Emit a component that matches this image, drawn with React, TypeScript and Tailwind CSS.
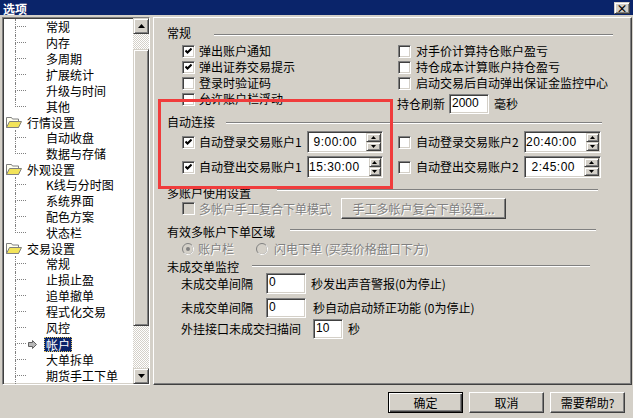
import type { ReactNode } from "react";

const sunken =
  "border border-t-[#808080] border-l-[#808080] border-r-white border-b-white shadow-[inset_1px_1px_0_#404040,inset_-1px_-1px_0_#d4d0c8]";
const raised =
  "border border-t-[#d4d0c8] border-l-[#d4d0c8] border-r-[#404040] border-b-[#404040] shadow-[inset_1px_1px_0_#ffffff,inset_-1px_-1px_0_#808080]";
const dis = "text-[#808080] [text-shadow:1px_1px_0_#ffffff]";
const num = "font-['Liberation_Sans',sans-serif]";

type TreeItem = { label: string; parent?: boolean; last?: boolean; selected?: boolean };

const tree: TreeItem[] = [
  { label: "常规" },
  { label: "内存" },
  { label: "多周期" },
  { label: "扩展统计" },
  { label: "升级与时间" },
  { label: "其他", last: true },
  { label: "行情设置", parent: true },
  { label: "自动收盘" },
  { label: "数据与存储", last: true },
  { label: "外观设置", parent: true },
  { label: "K线与分时图" },
  { label: "系统界面" },
  { label: "配色方案" },
  { label: "状态栏", last: true },
  { label: "交易设置", parent: true },
  { label: "常规" },
  { label: "止损止盈" },
  { label: "追单撤单" },
  { label: "程式化交易" },
  { label: "风控" },
  { label: "帐户", selected: true },
  { label: "大单拆单" },
  { label: "期货手工下单" },
];

function Folder() {
  return (
    <svg width="16" height="13" viewBox="0 0 16 13" className="shrink-0">
      <path d="M0.5 1.5h5l1 1.5h6v8.5h-12z" fill="#fffff0" stroke="#808080" />
      <path d="M0.5 11.5l3-6h12l-3 6z" fill="#f2e35a" stroke="#808080" />
    </svg>
  );
}

function Arrow() {
  return (
    <svg width="9" height="9" viewBox="0 0 9 9">
      <path d="M0.5 2.5h4v-2l4 4-4 4v-2h-4z" fill="#b8b8b8" stroke="#606060" />
    </svg>
  );
}

function Tri({ up, w = 7, h = 4 }: { up?: boolean; w?: number; h?: number }) {
  return (
    <svg width={w} height={h} viewBox={`0 0 ${w} ${h}`}>
      <path d={up ? `M${w / 2} 0L${w} ${h}H0z` : `M0 0H${w}L${w / 2} ${h}z`} fill="#000" />
    </svg>
  );
}

function Check({ checked = false, disabled = false }: { checked?: boolean; disabled?: boolean }) {
  return (
    <span
      className={`flex h-[13px] w-[13px] shrink-0 items-center justify-center ${sunken} ${
        disabled ? "bg-[#d4d0c8]" : "bg-white"
      }`}
    >
      {checked && (
        <svg width="7" height="7" viewBox="0 0 7 7">
          <path d="M0.5 2.5l2 2 4-4" fill="none" stroke="#000" strokeWidth="2" />
        </svg>
      )}
    </span>
  );
}

function Radio({ checked = false }: { checked?: boolean }) {
  return (
    <svg width="12" height="12" viewBox="0 0 12 12" className="shrink-0">
      <circle cx="6" cy="6" r="5.5" fill="#d4d0c8" stroke="#808080" />
      <path d="M10 2.2A5.5 5.5 0 0 1 2.2 10" fill="none" stroke="#ffffff" />
      {checked && <circle cx="6" cy="6" r="2" fill="#808080" />}
    </svg>
  );
}

function Header({ label, left, width, top }: { label: string; left: number; width: number; top: number }) {
  return (
    <div className="flex h-[14px]">
      <span className="shrink-0 leading-[14px]" style={{ width: left }}>
        {label}
      </span>
      <div className="h-[2px] border-t border-b border-t-[#808080] border-b-white" style={{ width, marginTop: top }} />
    </div>
  );
}

function TimeField({ value, w }: { value: string; w: string }) {
  return (
    <div className={`flex h-[22px] ${w} bg-white p-[1px] ${sunken}`}>
      <span className={`flex flex-1 items-center justify-end pr-[9px] text-[12px] tracking-[0.5px] ${num}`}>{value}</span>
      <div className="flex w-[15px] flex-col">
        <div className={`flex flex-1 items-center justify-center bg-[#d4d0c8] ${raised}`}>
          <Tri up w={5} h={3} />
        </div>
        <div className={`flex flex-1 items-center justify-center bg-[#d4d0c8] ${raised}`}>
          <Tri w={5} h={3} />
        </div>
      </div>
    </div>
  );
}

function Field({ value, w, h }: { value: string; w: string; h: string }) {
  return (
    <div className={`${w} ${h} shrink-0 bg-white px-[2px] pt-[1px] text-[12px] leading-[14px] ${num} ${sunken}`}>{value}</div>
  );
}

function Btn({ children, def }: { children: ReactNode; def?: boolean }) {
  return (
    <div
      className={`flex h-[21px] w-[75px] items-center justify-center bg-[#d4d0c8] ${
        def
          ? "border border-black shadow-[inset_1px_1px_0_#ffffff,inset_-1px_-1px_0_#404040,inset_-2px_-2px_0_#808080]"
          : "border border-t-white border-l-white border-r-[#404040] border-b-[#404040] shadow-[inset_-1px_-1px_0_#808080]"
      }`}
    >
      {children}
    </div>
  );
}

function TreeRow({ item }: { item: TreeItem }) {
  if (item.parent) {
    return (
      <div className="flex h-4 items-center pl-[3px]">
        <Folder />
        <span className="ml-[5px]">{item.label}</span>
      </div>
    );
  }
  return (
    <div className="flex h-4 shrink-0">
      <div className="w-[12px]" />
      <div className="flex w-[11px] flex-col">
        <div className="h-[8px] border-b border-l border-dotted border-[#808080]" />
        <div className={`h-[8px] ${item.last ? "" : "border-l border-dotted border-[#808080]"}`} />
      </div>
      <div className="flex w-[20px] items-center pl-[2px]">{item.selected && <Arrow />}</div>
      <div className="flex items-center whitespace-nowrap">
        {item.selected ? (
          <span className="ml-[-2px] border border-dotted border-[#e8c860] bg-[#0a246a] px-[1px] leading-[13px] text-white">
            {item.label}
          </span>
        ) : (
          item.label
        )}
      </div>
    </div>
  );
}

export default function App() {
  return (
    <div className="relative h-[418px] w-[633px] overflow-hidden bg-[#d4d0c8] font-['Noto_Sans_CJK_SC','Noto_Sans',sans-serif] text-[12px] leading-[14px] text-black">
      {/* Title bar */}
      <div className="flex h-[15px] items-start justify-between bg-[#0a246a] pl-[3px] pr-[3px] pt-[2px]">
        <span className="font-bold leading-[13px] text-white">选项</span>
        <div className={`flex h-[12px] w-[16px] items-center justify-center bg-[#d4d0c8] text-[11px] font-bold leading-none ${raised}`}>
          ×
        </div>
      </div>

      <div className="mt-[2px] flex h-[368px]">
        {/* Tree */}
        <div className={`ml-[2px] flex w-[148px] bg-white ${sunken}`}>
          <div className="flex flex-1 flex-col overflow-hidden pt-[1px]">
            {tree.map((item, i) => (
              <TreeRow key={i} item={item} />
            ))}
          </div>
          <div className="flex w-[16px] flex-col">
            <div className={`flex h-[16px] items-center justify-center bg-[#d4d0c8] ${raised}`}>
              <Tri up />
            </div>
            <div className="h-[15px] bg-[repeating-conic-gradient(#d4d0c8_0_25%,#ffffff_0_50%)] bg-[length:2px_2px]" />
            <div className={`h-[277px] bg-[#d4d0c8] ${raised}`} />
            <div className="flex-1 bg-[repeating-conic-gradient(#d4d0c8_0_25%,#ffffff_0_50%)] bg-[length:2px_2px]" />
            <div className={`flex h-[16px] items-center justify-center bg-[#d4d0c8] ${raised}`}>
              <Tri />
            </div>
          </div>
        </div>

        {/* Settings panel */}
        <div className="ml-[3px] flex w-[479px] flex-col border-t border-l border-r border-b border-t-white border-l-white border-r-[#404040] border-b-[#404040] pl-[13px] pt-[8px] shadow-[inset_-1px_-1px_0_#808080]">
          <Header label="常规" left={47} width={399} top={8} />

          <div className="mt-[3px] flex pl-[15px]">
            <div className="flex w-[216px] flex-col">
              <div className="flex h-4 items-center gap-[4px]">
                <Check checked />
                <span>弹出账户通知</span>
              </div>
              <div className="flex h-4 items-center gap-[4px]">
                <Check checked />
                <span>弹出证券交易提示</span>
              </div>
              <div className="flex h-4 items-center gap-[4px]">
                <Check />
                <span>登录时验证码</span>
              </div>
              <div className="flex h-4 items-center gap-[4px]">
                <Check />
                <span>允许账户栏浮动</span>
              </div>
            </div>
            <div className="flex flex-col">
              <div className="flex h-4 items-center gap-[5px]">
                <Check />
                <span>对手价计算持仓账户盈亏</span>
              </div>
              <div className="flex h-4 items-center gap-[5px]">
                <Check />
                <span>持仓成本计算账户持仓盈亏</span>
              </div>
              <div className="flex h-4 items-center gap-[5px]">
                <Check />
                <span>启动交易后自动弹出保证金监控中心</span>
              </div>
              <div className="ml-[-1px] mt-[3px] flex h-[20px] items-center">
                <span className="w-[52px]">持仓刷新</span>
                <Field value="2000" w="w-[40px]" h="h-[20px]" />
                <span className="ml-[5px]">毫秒</span>
              </div>
            </div>
          </div>

          <div className="mt-[1px]">
            <Header label="自动连接" left={59} width={376} top={7} />
          </div>

          <div className="mt-[2px] flex flex-col gap-[3px] pl-[15px]">
            <div className="flex h-[22px] items-center">
              <div className="flex w-[125px] items-center gap-[4px]">
                <Check checked />
                <span>自动登录交易账户1</span>
              </div>
              <TimeField value="9:00:00" w="w-[76px]" />
              <div className="ml-[15px] flex w-[126px] items-center gap-[5px]">
                <Check />
                <span>自动登录交易账户2</span>
              </div>
              <TimeField value="20:40:00" w="w-[77px]" />
            </div>
            <div className="flex h-[22px] items-center">
              <div className="flex w-[125px] items-center gap-[4px]">
                <Check checked />
                <span>自动登出交易账户1</span>
              </div>
              <TimeField value="15:30:00" w="w-[76px]" />
              <div className="ml-[15px] flex w-[126px] items-center gap-[5px]">
                <Check />
                <span>自动登出交易账户2</span>
              </div>
              <TimeField value="2:45:00" w="w-[77px]" />
            </div>
          </div>

          <div className="mt-[8px]">
            <Header label="多账户使用设置" left={110} width={321} top={3} />
          </div>

          <div className="mt-[-2px] flex h-[21px] items-center pl-[15px]">
            <div className="flex w-[159px] items-center gap-[4px]">
              <Check disabled />
              <span className={dis}>多帐户手工复合下单模式</span>
            </div>
            <div className={`flex h-[21px] w-[165px] items-center justify-center bg-[#d4d0c8] ${dis} border border-t-white border-l-white border-r-[#404040] border-b-[#404040] shadow-[inset_-1px_-1px_0_#808080]`}>
              手工多帐户复合下单设置...
            </div>
          </div>

          <div className="mt-[6px]">
            <Header label="有效多帐户下单区域" left={123} width={306} top={4} />
          </div>

          <div className="mt-[2px] flex h-4 items-center pl-[15px]">
            <div className="flex w-[74px] items-center gap-[4px]">
              <Radio checked />
              <span className={dis}>账户栏</span>
            </div>
            <div className="flex items-center gap-[6px]">
              <Radio />
              <span className={dis}>闪电下单 (买卖价格盘口下方)</span>
            </div>
          </div>

          <div className="mt-[3px]">
            <Header label="未成交单监控" left={85} width={338} top={5} />
          </div>

          <div className="mt-[-1px] flex h-[21px] items-center pl-[14px]">
            <span className="w-[85px]">未成交单间隔</span>
            <Field value="0" w="w-[40px]" h="h-[21px]" />
            <span className="ml-[5px]">秒发出声音警报(0为停止)</span>
          </div>
          <div className="mt-[4px] flex h-[20px] items-center pl-[14px]">
            <span className="w-[85px]">未成交单间隔</span>
            <Field value="0" w="w-[40px]" h="h-[20px]" />
            <span className="ml-[7px]">秒自动启动矫正功能 (0为停止)</span>
          </div>
          <div className="mt-[1px] flex h-[20px] items-center pl-[14px]">
            <span className="w-[132px]">外挂接口未成交扫描间</span>
            <Field value="10" w="w-[30px]" h="h-[20px]" />
            <span className="ml-[5px]">秒</span>
          </div>
        </div>
      </div>

      {/* Dialog buttons */}
      <div className="mt-[7px] flex justify-end gap-[6px] pr-[8px]">
        <Btn def>确定</Btn>
        <Btn>取消</Btn>
        <Btn>需要帮助?</Btn>
      </div>

      {/* Red annotation box */}
      <div className="absolute left-[158px] top-[99px] h-[90px] w-[235px] border-[3px] border-[#f03c3c]" />
    </div>
  );
}
